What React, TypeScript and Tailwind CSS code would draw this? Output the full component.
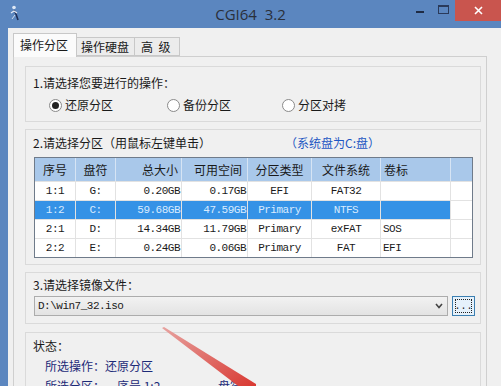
import React from 'react';

// 分区表数据
const rows = [
  { no: '1:1', drive: 'G:', total: '0.20GB', free: '0.17GB', type: 'EFI', fs: 'FAT32', label: '' },
  { no: '1:2', drive: 'C:', total: '59.68GB', free: '47.59GB', type: 'Primary', fs: 'NTFS', label: '' },
  { no: '2:1', drive: 'D:', total: '14.34GB', free: '11.79GB', type: 'Primary', fs: 'exFAT', label: 'SOS' },
  { no: '2:2', drive: 'E:', total: '0.24GB', free: '0.06GB', type: 'Primary', fs: 'FAT', label: 'EFI' },
];

const cols = 'grid grid-cols-[40px_40px_66px_66px_64px_69px_70px_1fr]';

function Radio({ checked, label }: { checked?: boolean; label: string }) {
  return (
    <div className="flex items-center gap-[3px]">
      <span className="w-[13px] h-[13px] rounded-full border border-[#8a8a8a] bg-white flex items-center justify-center">
        {checked && <span className="w-[7px] h-[7px] rounded-full bg-[#222]" />}
      </span>
      <span>{label}</span>
    </div>
  );
}

export default function App() {
  return (
    <div className="w-[501px] h-[386px] overflow-hidden relative bg-[#5b86bf] flex flex-col font-['Noto_Sans_CJK_SC',sans-serif] text-[12px] text-[#1a1a1a]">
      {/* title bar */}
      <div className="h-[28px] grid grid-cols-[1fr_auto_1fr] items-start shrink-0">
        <div className="pl-[9px] pt-[5px]">
          <svg width="12" height="16" viewBox="0 0 12 16">
            <circle cx="5" cy="2.5" r="1.8" fill="#dfe8f5" />
            <path d="M5 5 L7 9 L9 15" stroke="#1d2d55" strokeWidth="1.6" fill="none" />
            <path d="M2 8 L5 6 L8 8" stroke="#e8eef8" strokeWidth="1.2" fill="none" />
            <path d="M6 10 L3 14" stroke="#cfdcee" strokeWidth="1" fill="none" />
          </svg>
        </div>
        <div className="pt-[4px] text-[15px] leading-[20px] text-[#2a2f3a] font-['Open_Sans',sans-serif] whitespace-pre">CGI64  3.2</div>
        <div className="flex justify-end items-start">
          <div className="w-[22px] h-[21px] flex items-center justify-center">
            <span className="w-[8px] h-[2px] bg-[#1f2b44] mt-[2px]" />
          </div>
          <div className="w-[24px] h-[21px] flex items-center justify-center">
            <span className="w-[11px] h-[9px] border border-[#2a3a5a] border-t-2 mb-[3px]" />
          </div>
          <div className="w-[46px] h-[21px] bg-[#c9554e] flex items-center justify-center">
            <svg width="9" height="9" viewBox="0 0 9 9">
              <path d="M1 1 L8 8 M8 1 L1 8" stroke="#fff" strokeWidth="1.6" />
            </svg>
          </div>
        </div>
      </div>

      {/* body */}
      <div className="flex-1 flex min-h-0">
        <div className="w-[8px] shrink-0" />
        <div className="flex-1 bg-[#f0f0f0] pl-[5px] pt-[5px]">
          {/* tabs */}
          <div className="flex items-end h-[23px] leading-[18px]">
            <div className="w-[64px] h-[24px] border border-b-0 border-[#c8c8c8] bg-[#fbfbfb] relative z-10 -mb-px px-[6px] pt-[2px]">操作分区</div>
            <div className="w-[58px] h-[19px] border border-l-0 border-[#c8c8c8] bg-[#ececec] px-[4px]">操作硬盘</div>
            <div className="w-[45px] h-[19px] border border-l-0 border-[#c8c8c8] bg-[#ececec] px-[6px] whitespace-pre">高  级</div>
          </div>

          {/* panel */}
          <div className="w-[474px] h-[400px] border border-[#cfcfcf] bg-[#f0f0f0] pl-[11px] pt-[9px]">
            {/* group 1 */}
            <div className="w-[456px] h-[56px] border border-[#dadada] pl-[7px] pt-[8px] leading-[16px]">
              <div>1.请选择您要进行的操作：</div>
              <div className="grid grid-cols-[118px_115px_auto] ml-[16px] mt-[6px]">
                <Radio checked label="还原分区" />
                <Radio label="备份分区" />
                <Radio label="分区对拷" />
              </div>
            </div>

            {/* group 2 */}
            <div className="w-[456px] h-[136px] border border-[#dadada] mt-[7px] pl-[7px] pt-[5px] leading-[16px]">
              <div className="flex">
                <span className="w-[252px]">2.请选择分区（用鼠标左键单击）</span>
                <span className="text-[#1f57c3]">（系统盘为C:盘）</span>
              </div>
              <div className="ml-[1px] mt-[6px] w-[439px] border border-[#6f7b8a] bg-white">
                <div className={`${cols} h-[23px] bg-[#a9c8ea] items-stretch`}>
                  {['序号', '盘符', '总大小', '可用空间', '分区类型', '文件系统', '卷标', ''].map((h, i) => (
                    <div
                      key={i}
                      className={`flex items-center ${i > 0 ? 'border-l border-[#d6e4f4]' : ''} ${
                        i === 2 ? 'justify-end pr-[3px]' : i === 3 ? 'justify-end pr-[5px]' : i === 6 ? 'pl-[3px]' : 'justify-center'
                      }`}
                    >
                      {h}
                    </div>
                  ))}
                </div>
                {rows.map((r, ri) => {
                  const sel = ri === 1;
                  const cells = [r.no, r.drive, r.total, r.free, r.type, r.fs, r.label];
                  return (
                    <div key={ri} className={`${cols} h-[19px] border-t border-[#e2e2e2] font-['Liberation_Mono',monospace] text-[11px] tracking-[-0.5px]`}>
                      {cells.map((c, i) => (
                        <div
                          key={i}
                          className={`flex items-center ${i > 0 ? 'border-l border-[#e2e2e2]' : ''} ${
                            sel ? 'bg-[#3592e6] text-[#d8ebff] border-[#5aa6ee]' : ''
                          } ${i === 2 || i === 3 ? 'justify-end pr-[1px]' : i === 6 ? 'pl-[2px]' : 'justify-center'}`}
                        >
                          {c}
                        </div>
                      ))}
                      <div className="border-l border-[#e2e2e2]" />
                    </div>
                  );
                })}
              </div>
            </div>

            {/* group 3 */}
            <div className="w-[456px] h-[52px] border border-[#dadada] mt-[7px] pl-[7px] pt-[4px] leading-[16px]">
              <div>3.请选择镜像文件：</div>
              <div className="flex mt-[3px] ml-[1px]">
                <div className="w-[414px] h-[20px] border border-[#acacac] bg-gradient-to-b from-[#f2f2f2] to-[#e3e3e3] flex items-center justify-between pl-[3px] pr-[4px]">
                  <span className="font-['Liberation_Mono',monospace] text-[11px] tracking-[-0.5px]">D:\win7_32.iso</span>
                  <svg width="8" height="6" viewBox="0 0 8 6">
                    <path d="M1 1 L4 4.5 L7 1" stroke="#444" strokeWidth="1.6" fill="none" />
                  </svg>
                </div>
                <div className="ml-[4px] w-[23px] h-[20px] border border-[#3c7fb1] bg-[#e5f1fb] p-[2px]">
                  <div className="w-full h-full border border-dotted border-[#222] flex items-end justify-center text-[10px] leading-[10px] font-['Liberation_Mono',monospace]">...</div>
                </div>
              </div>
            </div>

            {/* group 4 */}
            <div className="w-[456px] h-[80px] border border-[#dadada] mt-[8px] pl-[7px] pt-[5px] leading-[16px]">
              <div>状态：</div>
              <div className="ml-[12px] mt-[4px] text-[#1c2a78]">所选操作：还原分区</div>
              <div className="ml-[12px] mt-[4px] text-[#1c2a78] flex">
                <span className="w-[72px]">所选分区：</span>
                <span className="w-[101px]">序号 1:2</span>
                <span>盘符 C:</span>
              </div>
            </div>
          </div>
        </div>
      </div>

      {/* red arrow annotation */}
      <svg className="absolute left-0 top-0 pointer-events-none" width="501" height="386">
        <defs>
          <linearGradient id="arr" x1="0" y1="0" x2="1" y2="1">
            <stop offset="0%" stopColor="#e7a3a0" />
            <stop offset="100%" stopColor="#d8332c" />
          </linearGradient>
        </defs>
        <polygon points="162,328 164,327 256,384 256,392 246,392" fill="url(#arr)" />
      </svg>
    </div>
  );
}
